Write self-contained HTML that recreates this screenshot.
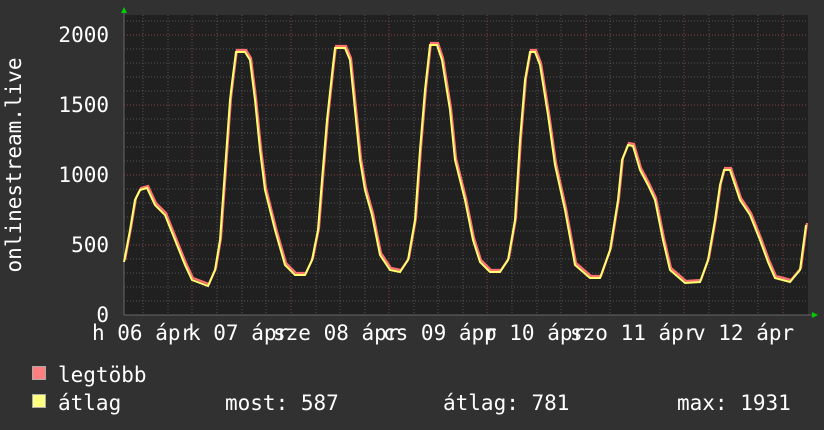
<!DOCTYPE html>
<html><head><meta charset="utf-8"><style>
html,body{margin:0;padding:0;background:#313131;}
svg{display:block}
text{font-family:"DejaVu Sans Mono","Liberation Mono",monospace;fill:#fff;font-size:21px}
</style></head><body>
<svg width="824" height="430" viewBox="0 0 824 430" xmlns="http://www.w3.org/2000/svg">
<rect width="824" height="430" fill="#313131"/>
<rect x="124" y="15" width="684" height="300" fill="#202020"/>
<g stroke="#555" stroke-width="1" stroke-dasharray="1,2">
<path d="M124 301H808M124 287H808M124 273H808M124 259H808M124 231H808M124 217H808M124 203H808M124 189H808M124 161H808M124 147H808M124 133H808M124 119H808M124 91H808M124 77H808M124 63H808M124 49H808M124 21H808"/>
<path d="M143 15V315M168 15V315M217 15V315M242 15V315M266 15V315M316 15V315M340 15V315M365 15V315M414 15V315M438 15V315M463 15V315M512 15V315M537 15V315M561 15V315M610 15V315M635 15V315M660 15V315M709 15V315M733 15V315M758 15V315"/>
</g>
<g stroke="#8a4040" stroke-width="1" stroke-dasharray="1,2">
<path d="M124 245H808M124 175H808M124 105H808M124 35H808"/>
<path d="M192 15V315M291 15V315M389 15V315M487 15V315M586 15V315M684 15V315M783 15V315"/>
</g>
<path d="M124 315H812M124 315V12" stroke="#666" stroke-width="1"/>
<polygon points="121,13 127,13 124,7" fill="#0c0"/>
<polygon points="812,312 812,318 818,315" fill="#0c0"/>
<polyline fill="none" stroke="#ff7070" stroke-width="2.2" transform="translate(1,-2)" points="124,262 130,230 135,200 140,190 147,188 155,205 165,215 175,240 185,265 192,280 200,283 208,286 215,270 220,240 225,170 230,100 233,75 236,52 245,52 250,60 255,100 260,150 265,190 275,230 285,265 295,275 305,275 312,260 318,230 322,180 327,120 333,65 335,48 345,48 350,60 355,110 360,160 365,190 372,215 380,255 390,270 400,272 408,260 415,220 420,150 425,90 430,45 437,45 442,60 450,110 455,160 465,200 473,240 480,262 490,272 500,272 508,260 515,220 520,140 525,80 530,52 535,52 540,65 548,115 555,165 565,210 575,265 590,278 600,278 610,250 618,200 622,160 628,145 633,146 640,170 648,185 655,200 663,240 670,270 685,283 700,282 708,260 715,220 720,185 724,170 730,170 740,200 750,215 760,240 768,262 775,278 790,282 800,270 806,225"/>
<polyline fill="none" stroke="#ffff70" stroke-width="2" points="124,262 130,230 135,200 140,190 147,188 155,205 165,215 175,240 185,265 192,280 200,283 208,286 215,270 220,240 225,170 230,100 233,75 236,52 245,52 250,60 255,100 260,150 265,190 275,230 285,265 295,275 305,275 312,260 318,230 322,180 327,120 333,65 335,48 345,48 350,60 355,110 360,160 365,190 372,215 380,255 390,270 400,272 408,260 415,220 420,150 425,90 430,45 437,45 442,60 450,110 455,160 465,200 473,240 480,262 490,272 500,272 508,260 515,220 520,140 525,80 530,52 535,52 540,65 548,115 555,165 565,210 575,265 590,278 600,278 610,250 618,200 622,160 628,145 633,146 640,170 648,185 655,200 663,240 670,270 685,283 700,282 708,260 715,220 720,185 724,170 730,170 740,200 750,215 760,240 768,262 775,278 790,282 800,270 806,225"/>
<g text-anchor="end">
<text x="109" y="42">2000</text>
<text x="109" y="112">1500</text>
<text x="109" y="182">1000</text>
<text x="109" y="252">500</text>
<text x="109" y="322">0</text>
</g>
<text transform="translate(21,165) rotate(-90)" text-anchor="middle">onlinestream.live</text>
<text x="92" y="340">h 06 ápr</text>
<text x="188" y="340">k 07 ápr</text>
<text x="273" y="340">sze 08 ápr</text>
<text x="383" y="340">cs 09 ápr</text>
<text x="484" y="340">p 10 ápr</text>
<text x="570" y="340">szo 11 ápr</text>
<text x="693" y="340">v 12 ápr</text>
<rect x="32.5" y="366.5" width="13" height="13" fill="#ff7f7f" stroke="#aaa"/>
<rect x="32.5" y="394.5" width="13" height="13" fill="#ffff7f" stroke="#aaa"/>
<text x="58" y="382">legtöbb</text>
<text x="58" y="410">átlag</text>
<text x="225" y="410">most: 587</text>
<text x="443" y="410">átlag: 781</text>
<text x="677" y="410">max: 1931</text>
</svg>
</body></html>
